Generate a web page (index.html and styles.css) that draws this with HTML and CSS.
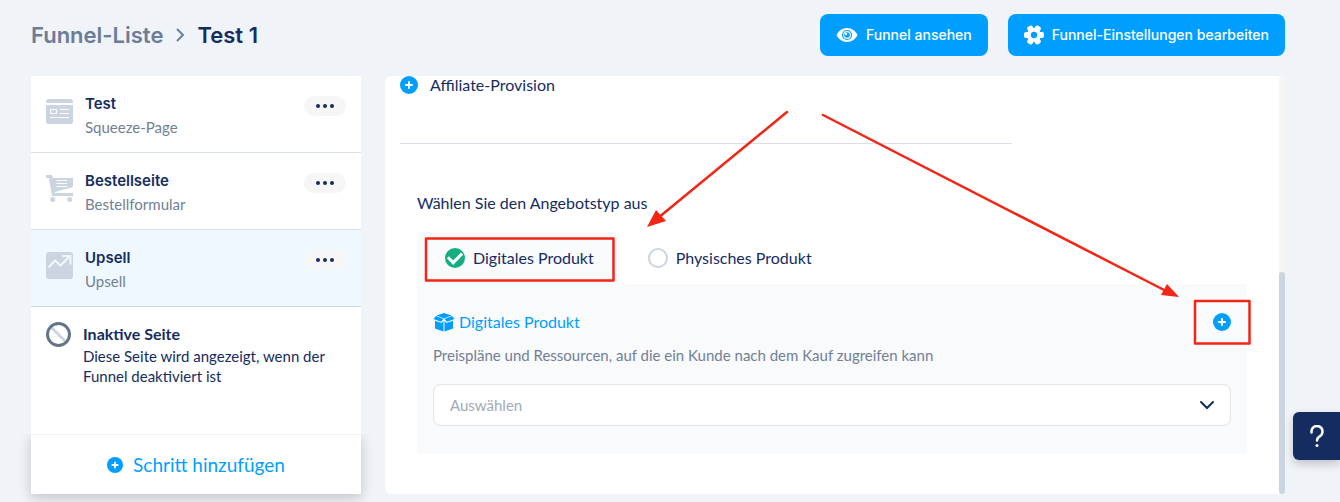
FILE: index.html
```html
<!DOCTYPE html>
<html lang="de">
<head>
  <meta charset="UTF-8">
  <title>Funnel-Liste - Test 1</title>
  <link rel="stylesheet" href="styles.css">
</head>
<body>
  <svg class="sprite" aria-hidden="true">
    <symbol id="plus" viewBox="0 0 18 18">
      <circle cx="9" cy="9" r="9" fill="#009fff"/>
      <path d="M9 6v6M6 9h6" stroke="#fff" stroke-width="2" stroke-linecap="round"/>
    </symbol>
    <symbol id="dots" viewBox="0 0 18 4">
      <circle cx="2" cy="2" r="2"/>
      <circle cx="9" cy="2" r="2"/>
      <circle cx="16" cy="2" r="2"/>
    </symbol>
  </svg>

  <header class="header">
    <nav class="breadcrumb">
      <a href="#">Funnel-Liste</a>
      <svg width="10" height="14" viewBox="0 0 10 14"><path d="M2 1l6 6-6 6" fill="none" stroke="#6b7d99" stroke-width="2"/></svg>
      <h1>Test 1</h1>
    </nav>
    <div class="actions">
      <button class="button">
        <svg width="22" height="16" viewBox="0 0 22 16">
          <path d="M0.500 8C2.500 4 6 1 11 1s8.500 3 10.500 7c-2 4-5.500 7-10.500 7S2.500 12 0.500 8z" fill="#fff"/>
          <circle cx="11" cy="8" r="4.500" fill="none" stroke="#009fff" stroke-width="1.200"/>
          <circle cx="11" cy="8" r="2.800" fill="#009fff"/>
          <circle cx="10" cy="7" r="1.200" fill="#fff"/>
        </svg>
        Funnel ansehen
      </button>
      <button class="button">
        <svg width="20" height="20" viewBox="0 0 20 20">
          <g fill="#fff">
            <circle cx="10" cy="10" r="7"/>
            <rect x="0" y="7" width="20" height="6" rx="2"/>
            <rect x="0" y="7" width="20" height="6" rx="2" transform="rotate(60 10 10)"/>
            <rect x="0" y="7" width="20" height="6" rx="2" transform="rotate(120 10 10)"/>
          </g>
          <circle cx="10" cy="10" r="3.200" fill="#009fff"/>
        </svg>
        Funnel-Einstellungen bearbeiten
      </button>
    </div>
  </header>

  <div class="layout">
    <aside class="sidebar">
      <ul class="steps">
        <li class="step">
          <svg class="step-icon" viewBox="0 0 28 28">
            <path d="M3 1h21a3 3 0 0 1 3 3v1H0V4a3 3 0 0 1 3-3zM0 7h27v16.500a2.500 2.500 0 0 1-2.500 2.500h-22A2.500 2.500 0 0 1 0 23.500z" fill="#cbd5e2"/>
            <path d="M4.500 11.500h6v4h-6zM14 11.500h9M14 15.500h9M4 19.500h19" fill="none" stroke="#fff"/>
          </svg>
          <div class="step-text"><h2>Test</h2><p>Squeeze-Page</p></div>
          <button class="more" aria-label="Mehr"><svg width="18" height="4"><use href="#dots"/></svg></button>
        </li>
        <li class="step">
          <svg class="step-icon" viewBox="0 0 28 28">
            <path d="M0 0h6l1 3h20v9L9 17v1h18v3H6L3 3H0z" fill="#cbd5e2"/>
            <circle cx="6.700" cy="24.500" r="2.500" fill="#cbd5e2"/>
            <circle cx="23.700" cy="24.500" r="2.500" fill="#cbd5e2"/>
            <path d="M10.500 5.500H21M10.500 8.500H21M10.500 11.500H21" stroke="#fff"/>
          </svg>
          <div class="step-text"><h2>Bestellseite</h2><p>Bestellformular</p></div>
          <button class="more" aria-label="Mehr"><svg width="18" height="4"><use href="#dots"/></svg></button>
        </li>
        <li class="step active">
          <svg class="step-icon" viewBox="0 0 28 28">
            <rect width="27" height="27" rx="3" fill="#cbd5e2"/>
            <path d="M2.500 15.500L9 8.500l5.500 5 9.500-9.500M16 4h8.500v8.500" fill="none" stroke="#f0f8ff" stroke-width="2"/>
          </svg>
          <div class="step-text"><h2>Upsell</h2><p>Upsell</p></div>
          <button class="more" aria-label="Mehr"><svg width="18" height="4"><use href="#dots"/></svg></button>
        </li>
      </ul>
      <div class="inactive">
        <svg width="26" height="26" viewBox="0 0 26 26">
          <path d="M5 5l15 15" stroke="#cbd5e2" stroke-width="3"/>
          <circle cx="12.500" cy="12.500" r="11" fill="none" stroke="#64748b" stroke-width="3"/>
        </svg>
        <div>
          <h2>Inaktive Seite</h2>
          <p>Diese Seite wird angezeigt, wenn der Funnel deaktiviert ist</p>
        </div>
      </div>
      <button class="add-step"><svg width="16" height="16"><use href="#plus"/></svg>Schritt hinzufügen</button>
    </aside>

    <main class="panel">
      <div class="affiliate">
        <button class="plus-button" aria-label="Affiliate-Provision hinzufügen"><svg width="18" height="18"><use href="#plus"/></svg></button>
        <span>Affiliate-Provision</span>
      </div>
      <hr class="divider">

      <fieldset class="offer">
        <legend>Wählen Sie den Angebotstyp aus</legend>
        <div class="tabs">
          <label class="tab selected"><input type="radio" name="offer" checked>Digitales Produkt</label>
          <label class="tab"><input type="radio" name="offer">Physisches Produkt</label>
        </div>
        <div class="product">
          <div class="product-head">
            <svg width="22" height="20" viewBox="0 0 22 20" fill="#009fff">
              <path d="M11 1l7.500 2.500L11 6.500 3.500 3.500zM3 4l7.500 3L8 9.700.500 7zM19 4l2.500 3L14 9.700 11.500 7zM2 8.700L8.500 11l2-2V19.500L2 16.500zM20 8.700L13.500 11l-2-2V19.500l8.500-3z"/>
            </svg>
            <label for="product">Digitales Produkt</label>
            <button class="plus-button" aria-label="Produkt hinzufügen"><svg width="18" height="18"><use href="#plus"/></svg></button>
          </div>
          <p>Preispläne und Ressourcen, auf die ein Kunde nach dem Kauf zugreifen kann</p>
          <div class="select">
            <select id="product"><option>Auswählen</option></select>
            <svg width="16" height="10" viewBox="0 0 16 10"><path d="M2 2l6 6 6-6" fill="none" stroke="#152c61" stroke-width="2" stroke-linecap="round"/></svg>
          </div>
        </div>
      </fieldset>
      <div class="scrollbar"></div>
    </main>
  </div>

  <button class="help" aria-label="Hilfe">
    <svg width="14" height="22" viewBox="0 0 14 22"><path d="M1.500 7.500V6.500a5.500 5.500 0 1 1 8.500 4.600c-2 1.200-3 2-3 4.400" fill="none" stroke="#fff" stroke-width="2.500" stroke-linecap="round"/><circle cx="7" cy="20.500" r="1.500" fill="#fff"/></svg>
  </button>

  <!-- hint arrows and frames over the page -->
  <svg class="marks" width="1340" height="502" viewBox="0 0 1340 502">
    <g fill="none" stroke="#f32514" stroke-width="2.500" stroke-linecap="round" stroke-linejoin="round">
      <rect x="426" y="238.500" width="187.500" height="42"/>
      <rect x="1195" y="301" width="54.500" height="42.500"/>
      <path d="M787 112L658 218M823 115l345 177"/>
    </g>
    <path d="M647 227l9-17 10 11zM1179 297l-18-2 6-11z" fill="#f32514"/>
  </svg>
</body>
</html>
```

FILE: styles.css
```css
* {
  box-sizing: border-box;
}

body {
  margin: 0;
  padding: 14px 55px 8px 31px;
  min-height: 100vh;
  display: flex;
  flex-direction: column;
  font-family: Lato, "Noto Sans", sans-serif;
  font-size: 15px;
  line-height: 20px;
  color: #152c61;
  background-color: #f0f3f8;
}

h1, h2, p, ul {
  margin: 0;
  padding: 0;
}

button {
  padding: 0;
  border: none;
  background: none;
  font: inherit;
  color: inherit;
  cursor: pointer;
}

svg {
  display: block;
  flex-shrink: 0;
}

.sprite {
  position: absolute;
  width: 0;
  height: 0;
}

.header {
  display: flex;
  justify-content: space-between;
  align-items: center;
  margin-bottom: 20px;
}

.breadcrumb {
  display: flex;
  align-items: center;
  gap: 12px;
  font-family: Inter, sans-serif;
  font-size: 22px;
  font-weight: 600;
}

.breadcrumb a {
  color: #6b7d99;
  text-decoration: none;
}

.breadcrumb h1 {
  font-size: 22px;
  font-weight: 600;
}

.actions {
  display: flex;
  gap: 20px;
}

.button {
  display: flex;
  align-items: center;
  gap: 8px;
  height: 42px;
  padding: 0 16px;
  border-radius: 8px;
  background-color: #009fff;
  color: #fff;
  font-family: Inter, sans-serif;
  font-size: 14px;
  font-weight: 500;
}

.layout {
  flex: 1;
  display: flex;
  gap: 24px;
}

.sidebar {
  width: 330px;
  flex-shrink: 0;
  display: flex;
  flex-direction: column;
  background-color: #fff;
}

.steps {
  list-style: none;
}

.step {
  display: flex;
  align-items: flex-start;
  gap: 11px;
  height: 77px;
  padding: 16px 15px;
  border-bottom: 1px solid #dbe1ea;
}

.step.active {
  background-color: #f0f8ff;
  border-color: #cbd9ea;
}

.step-icon {
  width: 28px;
  height: 28px;
  margin-top: 6px;
}

.step-text {
  flex: 1;
}

.step h2 {
  font-family: Inter, sans-serif;
  font-size: 15px;
  font-weight: 600;
  line-height: 24px;
}

.step p {
  line-height: 22px;
  color: #718096;
}

.more {
  display: flex;
  align-items: center;
  justify-content: center;
  width: 42px;
  height: 20px;
  margin-top: 4px;
  border-radius: 10px;
  background-color: #f6f6f6;
  fill: #152c61;
}

.inactive {
  flex: 1;
  display: flex;
  gap: 11px;
  padding: 15px;
}

.inactive h2 {
  font-size: 16px;
  font-weight: 700;
  line-height: 24px;
}

.add-step {
  display: flex;
  align-items: center;
  justify-content: center;
  gap: 10px;
  height: 60px;
  border-top: 1px solid #edf0f3;
  background-color: #fff;
  box-shadow: 0 4px 12px rgba(0, 0, 0, 0.2);
  clip-path: inset(0 -20px -20px -20px);
  color: #009fff;
  font-size: 19px;
}

.panel {
  position: relative;
  flex: 1;
  padding: 0 38px 40px 15px;
  border-radius: 6px;
  background-color: #fff;
}

.affiliate {
  display: flex;
  align-items: center;
  gap: 12px;
  height: 18px;
  font-size: 16px;
}

.divider {
  width: 612px;
  max-width: 100%;
  margin: 49px 0;
  border: none;
  border-top: 1px solid #dbdfe6;
}

.offer {
  margin: 0 0 0 17px;
  padding: 0;
  border: none;
}

.offer legend {
  padding: 0;
  font-size: 16px;
}

.tabs {
  display: flex;
  margin-top: 19px;
}

.tab {
  display: flex;
  align-items: center;
  gap: 8px;
  height: 52px;
  padding: 0 26px 0 28px;
  border-radius: 6px 6px 0 0;
  font-size: 16px;
}

.tab.selected {
  background-color: #f9fafc;
}

.tab input {
  appearance: none;
  width: 20px;
  height: 20px;
  margin: 0;
  border: 2px solid #cbd5e2;
  border-radius: 50%;
}

.tab input:checked {
  display: grid;
  place-items: center;
  border-color: #15ae82;
  background-color: #15ae82;
}

.tab input:checked::before {
  content: "";
  width: 11px;
  height: 6px;
  margin-bottom: 3px;
  border: solid #fff;
  border-width: 0 0 3px 3px;
  transform: rotate(-45deg);
}

.product {
  padding: 28px 16px;
  background-color: #f9fafc;
}

.product-head {
  display: flex;
  align-items: center;
  gap: 4px;
  color: #009fff;
  font-size: 16px;
}

.product-head .plus-button {
  margin-left: auto;
}

.product p {
  margin: 13px 0 19px;
  color: #718096;
}

.select {
  position: relative;
}

.select select {
  appearance: none;
  display: block;
  width: 100%;
  height: 42px;
  padding: 0 16px;
  border: 1px solid #e2e5e9;
  border-radius: 8px;
  background-color: #fff;
  color: #a0aab8;
  font: inherit;
}

.select svg {
  position: absolute;
  top: 16px;
  right: 16px;
  pointer-events: none;
}

.scrollbar {
  position: absolute;
  top: 0;
  right: 0;
  bottom: 0;
  width: 6px;
  border-radius: 3px;
  background-color: #f5f5f5;
}

.scrollbar::after {
  content: "";
  position: absolute;
  top: 47%;
  bottom: 0;
  width: 6px;
  border-radius: 3px;
  background-color: #cbd5e2;
}

.help {
  position: fixed;
  right: 0;
  bottom: 42px;
  display: flex;
  align-items: center;
  justify-content: center;
  width: 47px;
  height: 48px;
  border-radius: 6px 0 0 6px;
  background-color: #152c61;
  box-shadow: 0 4px 10px rgba(0, 0, 0, 0.2);
}

.marks {
  position: absolute;
  top: 0;
  left: 0;
  pointer-events: none;
}
```
